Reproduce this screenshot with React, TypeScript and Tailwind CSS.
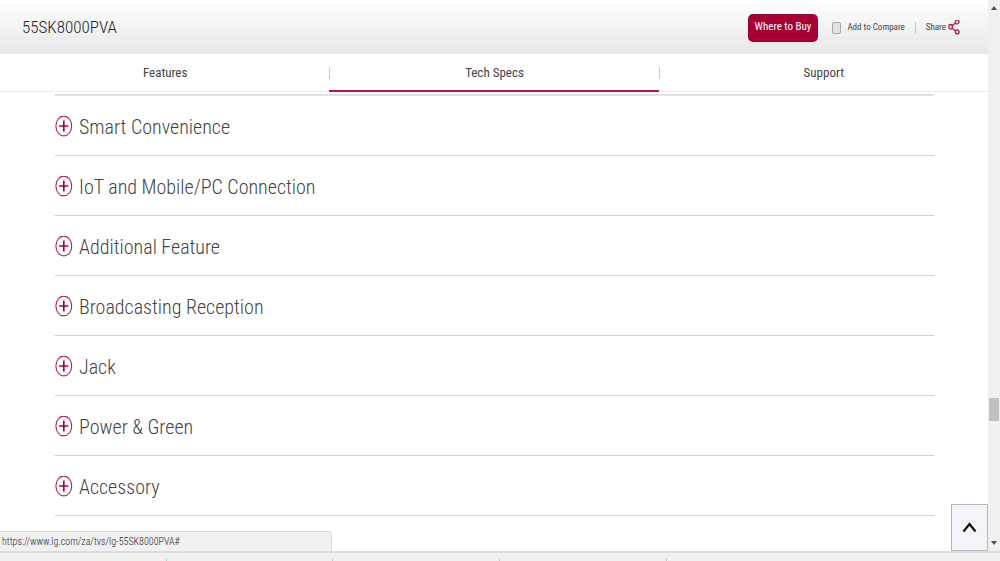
import { useState } from "react";

const TABS = ["Features", "Tech Specs", "Support"];

const SECTIONS = [
    "Smart Convenience",
    "IoT and Mobile/PC Connection",
    "Additional Feature",
    "Broadcasting Reception",
    "Jack",
    "Power & Green",
    "Accessory",
];

function PlusIcon() {
    return (
        <svg className="h-[22px] w-[18px] shrink-0" viewBox="0 0 18 22" fill="none" stroke="#b5204f">
            <ellipse cx="8.8" cy="10" rx="7.9" ry="9.9" strokeWidth="1.1" />
            <path d="M4.3 10H13.3M8.8 4.5V15.5" stroke="#a50034" strokeWidth="1.7" />
        </svg>
    );
}

function ShareIcon() {
    return (
        <svg className="h-4 w-3" viewBox="0 0 12 16" fill="none" stroke="#b0264f" strokeWidth="1.4">
            <ellipse cx="2.6" cy="6.8" rx="1.8" ry="2.3" />
            <ellipse cx="9.2" cy="2" rx="1.8" ry="1.9" />
            <ellipse cx="9.2" cy="12" rx="1.8" ry="2" />
            <path d="M4.2 5.6L7.6 3M4.2 8.2L7.6 11" />
        </svg>
    );
}

function ProductHeader() {
    return (
        <header className="flex h-[54px] items-center justify-between bg-linear-to-b from-white to-[#e7e7e7] pt-px pr-7 pl-[22px]">
            <h1 className="text-[17px] font-light text-[#222]">55SK8000PVA</h1>
            <div className="flex items-center text-[9px] text-[#444]">
                <button
                    type="button"
                    className="h-7 rounded-[5px] bg-[#a50034] px-[7px] text-[11px] whitespace-nowrap text-white"
                >
                    Where to Buy
                </button>
                <label className="ml-[14px] flex items-center gap-[6px] whitespace-nowrap">
                    <input
                        type="checkbox"
                        className="h-3 w-[9px] appearance-none rounded-[2px] border border-[#aaa] bg-[#e2e2e2]"
                    />
                    Add to Compare
                </label>
                <span className="mx-[10px] h-3 w-px bg-[#c4c4c4]" />
                <button type="button" className="flex items-center gap-[2px]">
                    Share
                    <ShareIcon />
                </button>
            </div>
        </header>
    );
}

type TabBarProps = {
    active: string;
    setActive: (tab: string) => void;
};

function TabBar({ active, setActive }: TabBarProps) {
    return (
        <nav className="grid h-[38px] grid-cols-3 border-b border-[#e9e9e9]">
            {TABS.map((tab, i) => (
                <button
                    key={tab}
                    type="button"
                    onClick={() => setActive(tab)}
                    className={`-mb-px flex items-center border-b-2 pt-px text-[13px] text-[#444] ${
                        tab === active ? "border-[#b0174a]" : "border-transparent"
                    }`}
                >
                    <span className={`h-3 w-px ${i > 0 ? "bg-[#c8c8c8]" : ""}`} />
                    <span className="flex-1">{tab}</span>
                </button>
            ))}
        </nav>
    );
}

function Scrollbar() {
    return (
        <div className="flex w-3 shrink-0 flex-col items-center bg-[#f0f0f0] py-[6px]">
            <svg className="h-1 w-[6px]" viewBox="0 0 6 4" fill="#505050">
                <path d="M3 0L6 4H0Z" />
            </svg>
            <div className="grow-[388]" />
            <div className="h-[23px] w-[10px] bg-[#c1c1c1]" />
            <div className="grow-[120]" />
            <svg className="h-1 w-[6px]" viewBox="0 0 6 4" fill="#505050">
                <path d="M0 0H6L3 4Z" />
            </svg>
        </div>
    );
}

function App() {
    const [active, setActive] = useState("Tech Specs");

    return (
        <div className="flex min-h-screen flex-col bg-white font-['Roboto_Condensed','Roboto',sans-serif]">
            <div className="relative flex flex-1">
                <div className="min-w-0 flex-1">
                    <ProductHeader />
                    <TabBar active={active} setActive={setActive} />
                    <main className="mt-[2px] mr-[54px] ml-[55px] border-t-2 border-[#e2e2e2]">
                        {SECTIONS.map((title) => (
                            <button
                                key={title}
                                type="button"
                                className="flex h-[60px] w-full items-center gap-[6px] border-b border-[#d2d2d2] pt-[3px] text-left text-[20px] font-light text-[#444]"
                            >
                                <PlusIcon />
                                {title}
                            </button>
                        ))}
                    </main>
                </div>
                <Scrollbar />

                <a
                    href="#"
                    aria-label="Back to top"
                    className="absolute right-3 bottom-0 flex h-[47px] w-[37px] items-center justify-center border border-[#b5b5ba] bg-[#f3f4f9]"
                >
                    <svg className="h-3 w-4" viewBox="0 0 16 12" fill="none" stroke="#111" strokeWidth="2.2">
                        <path d="M1.5 9.5L7.5 2L13.5 9.5" />
                    </svg>
                </a>
                <div className="absolute bottom-0 left-0 h-5 w-[332px] rounded-tr border-t border-r border-[#dcdcdc] bg-[#f1f1f1] pl-[2px] text-[10px] leading-5 font-light text-[#222]">
                    https://www.lg.com/za/tvs/lg-55SK8000PVA#
                </div>
            </div>
            <footer className="grid h-[10px] grid-cols-6 items-end border-t-2 border-[#dcdcdc] bg-[#f0f0f0]">
                {[0, 1, 2, 3].map((n) => (
                    <span key={n} className="h-[3px] border-r border-[#c8c8c8]" />
                ))}
            </footer>
        </div>
    );
}

export default App;
